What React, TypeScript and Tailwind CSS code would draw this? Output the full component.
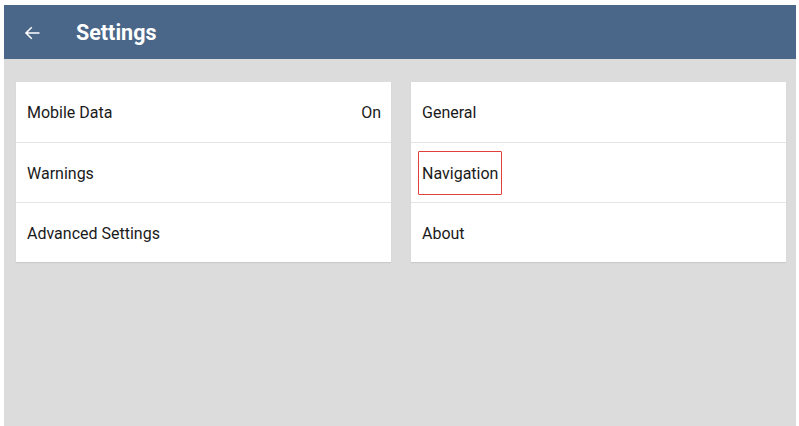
import React from 'react';

const leftRows = [
    { label: 'Mobile Data', value: 'On' },
    { label: 'Warnings' },
    { label: 'Advanced Settings' },
];

const rightRows = [
    { label: 'General' },
    { label: 'Navigation', highlight: true },
    { label: 'About' },
];

type Row = { label: string; value?: string; highlight?: boolean };

const Card = ({ rows }: { rows: Row[] }) => (
    <div className="flex-1 bg-white shadow-[0_1px_1px_rgba(0,0,0,0.08)]">
        {rows.map((row, i) => (
            <div
                key={row.label}
                className={`h-[60px] flex items-center justify-between pt-[2px] pl-[11px] pr-[10px] ${i > 0 ? 'border-t border-[#e4e4e4]' : ''}`}
            >
                {row.highlight ? (
                    <span className="-ml-[4px] -mt-[2px] px-[3px] pt-[2px] h-[44px] flex items-center border-[1.5px] border-[#e0403c] rounded-[1px]">
                        {row.label}
                    </span>
                ) : (
                    <span>{row.label}</span>
                )}
                {row.value && <span>{row.value}</span>}
            </div>
        ))}
    </div>
);

const App = () => {
    return (
        <div
            className="w-[799px] h-[426px] bg-white pt-[5px] pl-[4px] pr-[3px] flex flex-col text-[16px] text-[#1a1a1a]"
            style={{ fontFamily: 'Roboto, "Liberation Sans", sans-serif' }}
        >
            <div className="h-[54px] shrink-0 bg-[#4a6688] flex items-center pt-[2px] text-white">
                <svg width="18" height="18" viewBox="0 0 24 24" className="ml-[19px]" fill="none" stroke="white" strokeWidth="2" strokeLinecap="square">
                    <path d="M21 12H4M11 5l-7 7 7 7" />
                </svg>
                <span className="ml-[35px] text-[21.5px] font-bold">Settings</span>
            </div>
            <div className="flex-1 bg-[#dcdcdc] flex items-start gap-[20px] pt-[23px] pl-[12px] pr-[10px]">
                <Card rows={leftRows} />
                <Card rows={rightRows} />
            </div>
        </div>
    );
};

export default App;
